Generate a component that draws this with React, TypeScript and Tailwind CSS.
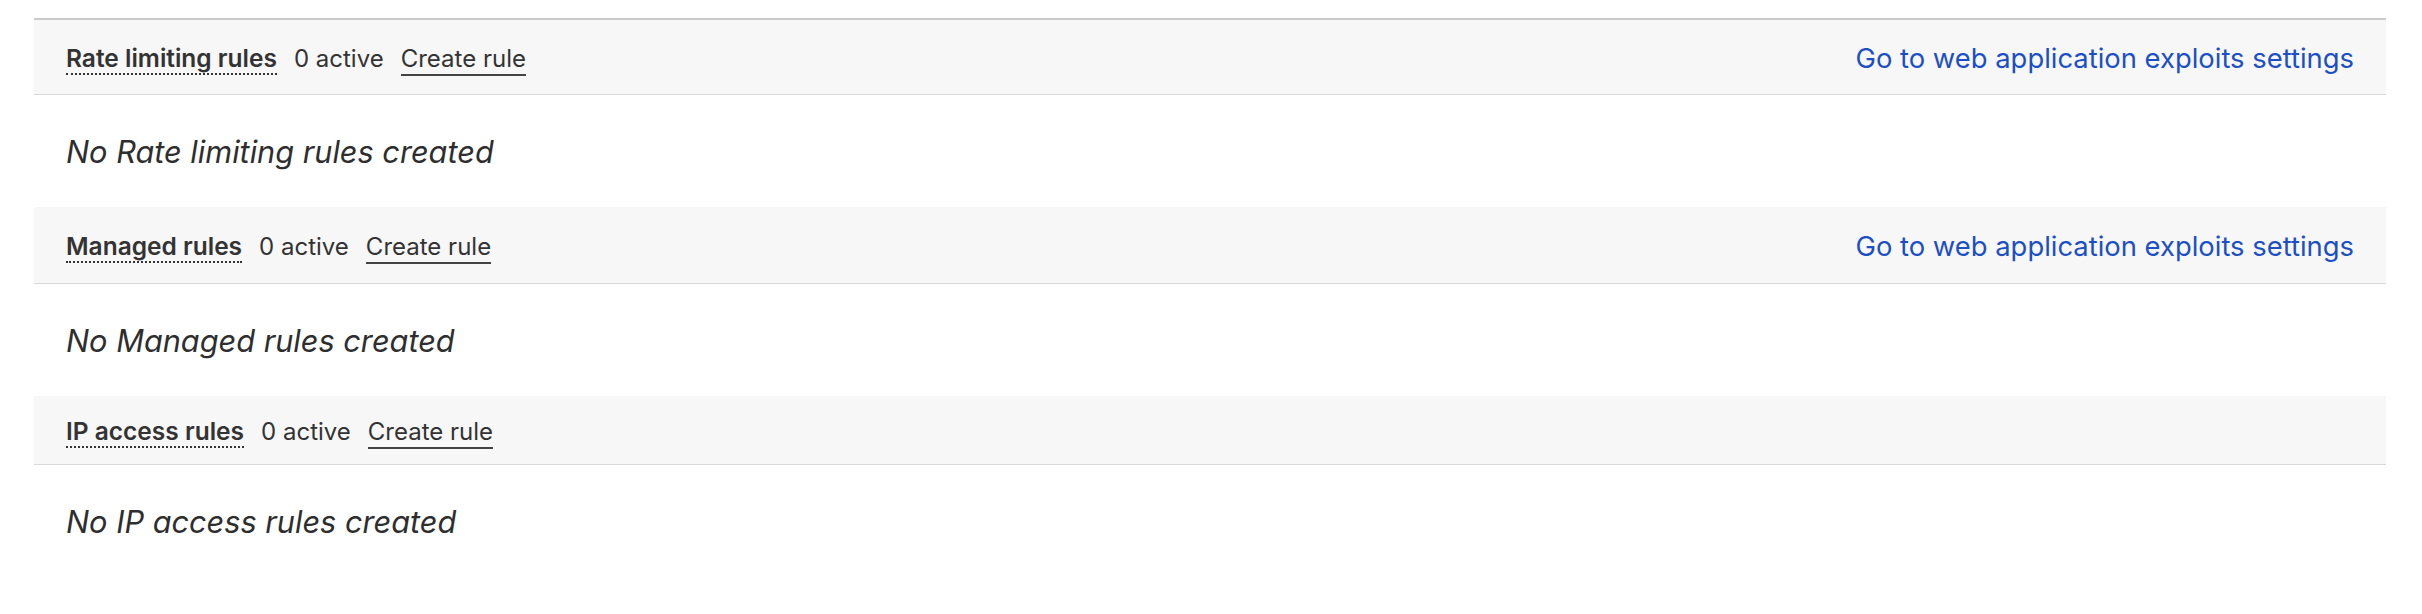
import React from "react";

type Section = {
  title: string;
  active: number;
  link?: string;
};

const sections: Section[] = [
  { title: "Rate limiting rules", active: 0, link: "Go to web application exploits settings" },
  { title: "Managed rules", active: 0, link: "Go to web application exploits settings" },
  { title: "IP access rules", active: 0 },
];

function RuleSection({ section, first }: { section: Section; first: boolean }) {
  return (
    <div>
      <div
        className={
          "flex items-center justify-between bg-[#f7f7f7] border-b border-[#d9d9d9] px-[32px] pt-[3px] " +
          (first ? "border-t-2 border-t-[#cbcbcb] " : "") +
          (section.link ? "h-[77px]" : "h-[69px]")
        }
      >
        <div className="flex items-baseline gap-[17px] text-[24px] text-[#333]">
          <span className="font-semibold text-[24.5px] border-b-2 border-dotted border-[#333] leading-[30px]">
            {section.title}
          </span>
          <span>{section.active} active</span>
          <a className="border-b-2 border-[#444] leading-[30px] cursor-pointer">Create rule</a>
        </div>
        {section.link && (
          <a className="text-[27.4px] text-[#1d4fc4] cursor-pointer">{section.link}</a>
        )}
      </div>
      <div className="h-[112px] flex items-center px-[32px] pt-[3px]">
        <p className="italic text-[30.7px] text-[#2e2e2e]">No {section.title} created</p>
      </div>
    </div>
  );
}

export default function App() {
  return (
    <div
      className="min-h-[614px] bg-white pt-[18px] pl-[34px] pr-[36px]"
      style={{ fontFamily: "Inter, 'Noto Sans', sans-serif" }}
    >
      {sections.map((s, i) => (
        <RuleSection key={s.title} section={s} first={i === 0} />
      ))}
    </div>
  );
}
